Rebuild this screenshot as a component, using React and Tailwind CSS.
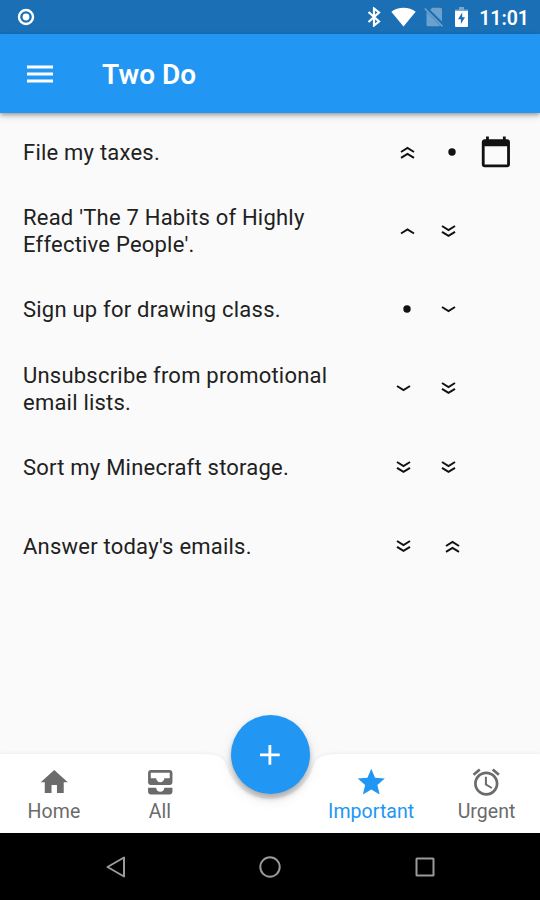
import { MdAccessAlarm, MdAdd, MdAllInbox, MdCalendarToday, MdHome, MdStar } from 'react-icons/md';

const tasks = [
  { title: 'File my taxes.', importance: 'up2', urgency: 'dot', hasDate: true },
  { title: "Read 'The 7 Habits of Highly Effective People'.", importance: 'up1', urgency: 'down2' },
  { title: 'Sign up for drawing class.', importance: 'dot', urgency: 'down1' },
  { title: 'Unsubscribe from promotional email lists.', importance: 'down1', urgency: 'down2' },
  { title: 'Sort my Minecraft storage.', importance: 'down2', urgency: 'down2' },
  { title: "Answer today's emails.", importance: 'down2', urgency: 'up2' },
];

export default function App() {
  return (
    <div className="flex h-[900px] w-[540px] flex-col overflow-hidden bg-[#fafafa] font-['Roboto',sans-serif]">
      <StatusBar />

      {/* App bar */}
      <header className="z-10 flex h-[78.75px] shrink-0 items-center bg-[#2196f3] pt-[2px] pl-[27px] text-white shadow-[0_2px_4px_rgba(0,0,0,0.3),0_4px_8px_rgba(0,0,0,0.1)]">
        <svg className="h-[18px] w-[26px]" viewBox="0 0 26 18">
          <path d="M0 2H26M0 9H26M0 16H26" stroke="currentColor" strokeWidth="3" />
        </svg>
        <h1 className="ml-[49px] pt-px text-[28px] leading-none font-semibold">Two Do</h1>
      </header>

      {/* Task list */}
      <main className="flex-1">
        {tasks.map((task) => (
          <TaskRow key={task.title} task={task} />
        ))}
      </main>

      <BottomBar />
      <SystemNav />
    </div>
  );
}

function StatusBar() {
  return (
    <div className="flex h-[33.75px] shrink-0 items-center justify-between bg-[#1a6fb5] pt-px pr-[12px] pl-[17px] text-white">
      <svg className="h-[18px] w-[18px]" viewBox="0 0 18 18">
        <circle cx="9" cy="9" r="7" fill="none" stroke="currentColor" strokeWidth="2.4" />
        <circle cx="9" cy="9" r="3.4" fill="currentColor" />
      </svg>
      <div className="flex items-center">
        <svg className="mr-[10px] h-[20px] w-[14px]" viewBox="0 0 14 20">
          <path d="M1.5 5 12 14.500 7 18.500V1.500L12 5.500 1.500 15" fill="none" stroke="currentColor" strokeWidth="2.2" />
        </svg>
        <svg className="mr-[8px] h-[20px] w-[25px]" viewBox="0 0 25 20">
          <path d="M12.5 19.5.3 4.8C3.5 2 8 .7 12.5.7S21.5 2 24.7 4.8z" fill="currentColor" />
        </svg>
        <svg className="mr-[11px] h-[20px] w-[20px] opacity-35" viewBox="0 0 20 20">
          <path d="M8.5.8H16.5a1.5 1.5 0 0 1 1.5 1.5V14.5L6 2.800zM2.500 4.500 16 18.500 15.500 19.200H4a1.500 1.500 0 0 1-1.500-1.500z" fill="currentColor" />
          <path d="M.8 1.500 18.500 19.300" stroke="currentColor" strokeWidth="1.700" />
        </svg>
        <svg className="mr-[11px] h-[20px] w-[13px]" viewBox="0 0 13 20">
          <path d="M4 0h5v2.500h4V5H0V2.500h4z" fill="currentColor" opacity="0.4" />
          <path d="M0 4h13v15a1 1 0 0 1-1 1H1a1 1 0 0 1-1-1z" fill="currentColor" />
          <path d="M7.200 5.500 3 12.200h2.900v4.800L10 10.200H7.200z" fill="#1a6fb5" />
        </svg>
        <span className="-mr-px pt-[2px] text-[19.5px] leading-none font-semibold">11:01</span>
      </div>
    </div>
  );
}

function TaskRow({ task }) {
  return (
    <div className="flex h-[78.75px] items-center pl-[23px]">
      <p className="w-[361.5px] pt-px pr-[40px] text-[22px] leading-[27px] tracking-[0.22px] text-[#212121]">{task.title}</p>
      <Priority level={task.importance} />
      <Priority level={task.urgency} />
      {task.hasDate && <MdCalendarToday className="ml-[4px] h-[33.75px] w-[33.75px] text-[#111111]" />}
    </div>
  );
}

const marks = {
  up1: 'M1 10.5 7.5 6.5 14 10.5',
  up2: 'M1 8 7.5 4 14 8M1 13.8 7.5 9.8 14 13.8',
  down1: 'M1 6 7.5 10 14 6',
  down2: 'M1 3 7.5 7 14 3M1 8.8 7.5 12.8 14 8.8',
};

// Downward marks sit slightly left of the upward ones
function Priority({ level }) {
  const isDown = level.startsWith('down');
  return (
    <div className={`flex w-[45px] justify-center ${isDown ? 'pr-[7px]' : ''}`}>
      <svg className="h-[16px] w-[15px]" viewBox="0 0 15 16">
        {level === 'dot' ? (
          <circle cx="7" cy="8" r="3.7" fill="#111111" />
        ) : (
          <path d={marks[level]} fill="none" stroke="#111111" strokeWidth="2" />
        )}
      </svg>
    </div>
  );
}

function BottomBar() {
  return (
    <nav className="relative flex h-[78.75px] shrink-0 text-[#6b6b6b]">
      {/* Bar surface with the notch for the add button */}
      <svg
        className="absolute inset-0 h-full w-full overflow-visible drop-shadow-[0_0_2px_rgba(0,0,0,0.08)]"
        viewBox="0 0 540 78.75"
      >
        <path
          d="M0 0H202.5Q223.6 0 226.4 11A45 45 0 0 0 313.6 11Q316.4 0 337.5 0H540V78.75H0z"
          fill="#ffffff"
        />
      </svg>
      <button className="absolute -top-[39px] left-[230.5px] z-10 flex h-[79px] w-[79px] items-center justify-center rounded-full bg-[#2196f3] text-white shadow-[0_4px_5px_rgba(0,0,0,0.25),0_5px_14px_rgba(0,0,0,0.1)]">
        <MdAdd className="mt-px h-[33.75px] w-[33.75px]" />
      </button>
      <div className="relative flex w-full items-center pt-[3px] pl-[0.5px]">
        <Tab icon={MdHome} label="Home" className="w-[107px]" />
        <Tab icon={MdAllInbox} label="All" className="w-[105px]" />
        <Tab icon={MdStar} label="Important" className="ml-[105px] w-[108px] text-[#2196f3]" />
        <Tab icon={MdAccessAlarm} label="Urgent" className="ml-[8px] w-[107px]" />
      </div>
    </nav>
  );
}

function Tab({ icon: Icon, label, className }) {
  return (
    <div className={`flex flex-col items-center ${className}`}>
      <Icon className="h-[32.5px] w-[32.5px]" />
      <span className="mt-px text-[19.5px] leading-[23px] font-[450] tracking-[0.05px]">{label}</span>
    </div>
  );
}

function SystemNav() {
  return (
    <div className="z-0 flex h-[67.5px] shrink-0 items-center justify-between bg-black px-[104px] pt-px text-[#9a9a9a]">
      <svg className="h-[24px] w-[24px]" viewBox="0 0 24 24" fill="none" stroke="currentColor" strokeWidth="2">
        <path d="M20 2.500V21.500L3.500 12z" strokeLinejoin="round" />
      </svg>
      <svg className="h-[24px] w-[24px]" viewBox="0 0 24 24" fill="none" stroke="currentColor" strokeWidth="2">
        <circle cx="12" cy="12" r="9.7" />
      </svg>
      <svg className="h-[24px] w-[24px]" viewBox="0 0 24 24" fill="none" stroke="currentColor" strokeWidth="2">
        <rect x="4.500" y="3.500" width="17" height="17" rx="0.5" />
      </svg>
    </div>
  );
}
